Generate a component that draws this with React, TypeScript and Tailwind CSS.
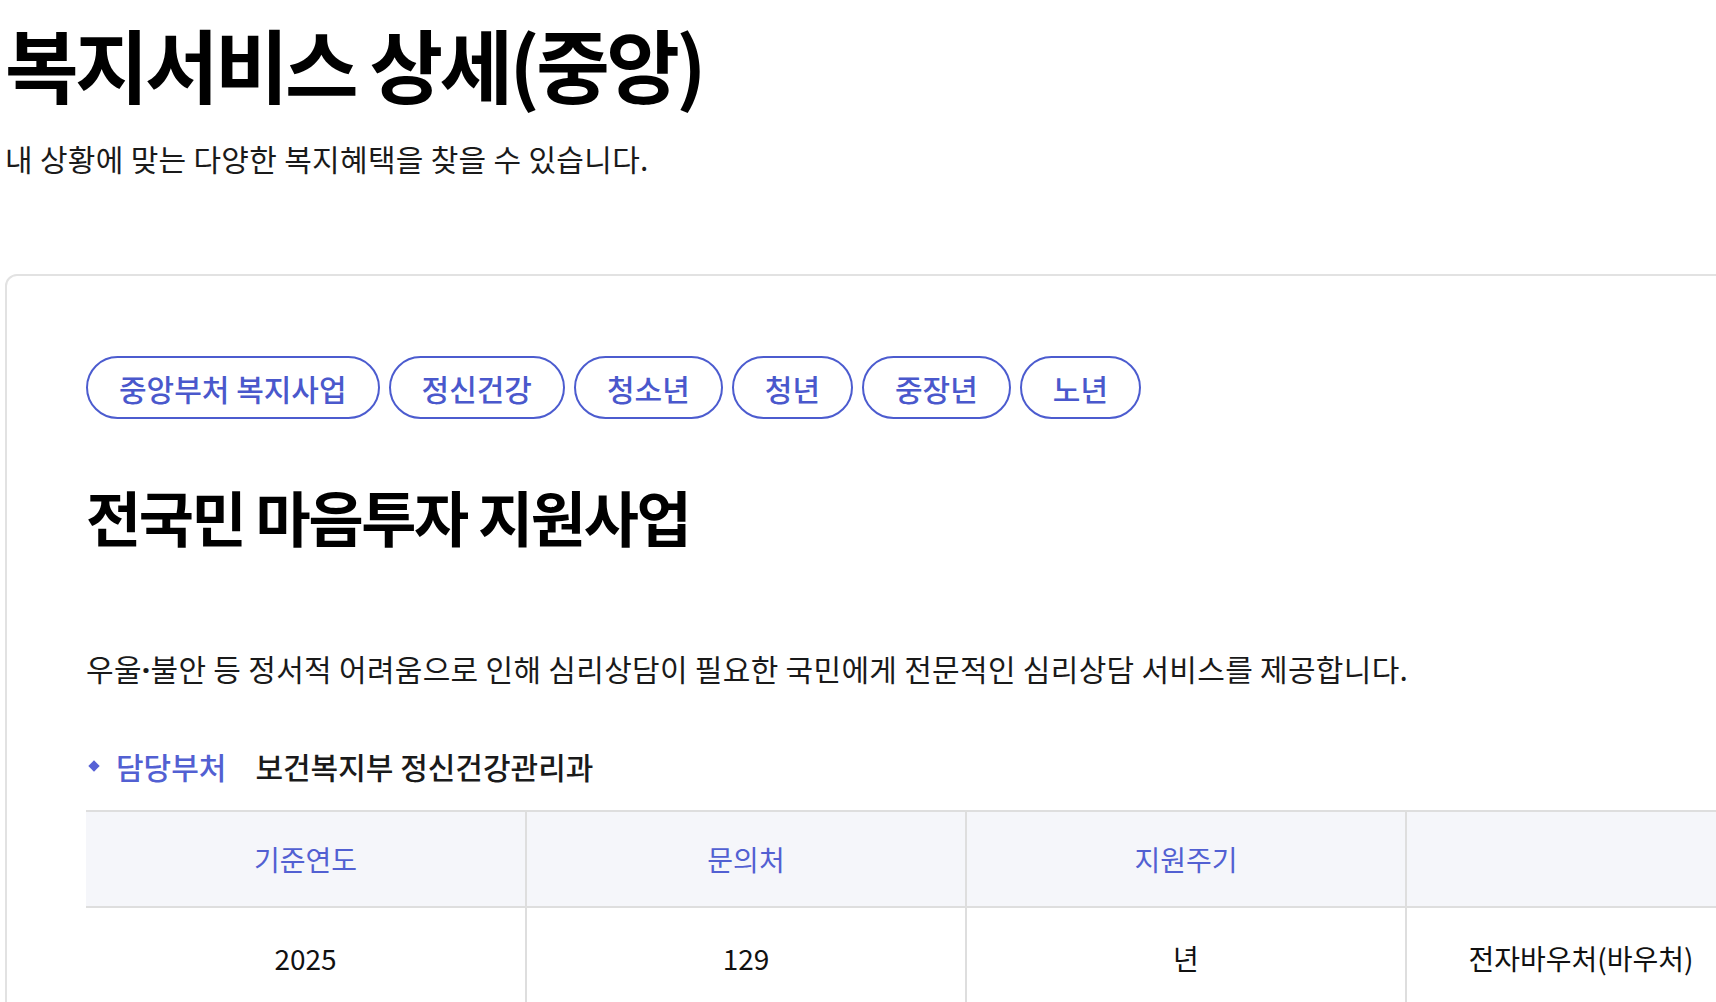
import React from 'react'

const TAGS = ['중앙부처 복지사업', '정신건강', '청소년', '청년', '중장년', '노년']

const HEADERS = ['기준연도', '문의처', '지원주기', '']
const VALUES = ['2025', '129', '년', '전자바우처(바우처)']
const COL_W = ['w-[439px]', 'w-[440px]', 'w-[440px]', 'w-[350px]']

const App = () => {
    return (
        <div className="h-[1002px] w-[1716px] overflow-hidden bg-white font-['Noto_Sans_CJK_KR','Noto_Sans',sans-serif] text-[#111]">
            <div className="pl-[5px]">
                <h1 className="pt-[22px] text-[80px] font-bold leading-none tracking-[-0.045em] text-black">
                    복지서비스 상세(중앙)
                </h1>
                <p className="mt-[41px] text-[30px] leading-none tracking-[0.01em] text-[#1a1a1a]">
                    내 상황에 맞는 다양한 복지혜택을 찾을 수 있습니다.
                </p>

                <div className="mt-[101px] w-[1800px] rounded-tl-[12px] border-2 border-[#e2e2e2] pl-[79px] pt-[80px]">
                    <div className="flex gap-[9px]">
                        {TAGS.map((tag) => (
                            <span
                                key={tag}
                                className="flex h-[63px] items-center rounded-full border-2 border-[#4c5ccf] px-[31px] text-[30px] font-medium leading-none text-[#4a58cc]"
                            >
                                {tag}
                            </span>
                        ))}
                    </div>

                    <h2 className="mt-[67px] text-[60px] font-bold leading-none tracking-[-0.04em] text-black">
                        전국민 마음투자 지원사업
                    </h2>

                    <p className="mt-[107px] text-[30px] leading-none tracking-[0.01em] text-[#1a1a1a]">
                        우울<span className="font-['Noto_Sans',sans-serif] font-bold">·</span>불안 등 정서적 어려움으로 인해 심리상담이 필요한 국민에게 전문적인 심리상담 서비스를 제공합니다.
                    </p>

                    <div className="mt-[66px] flex items-center text-[30px] font-medium leading-none">
                        <span className="ml-[4px] mr-[18px] h-[8px] w-[8px] rotate-45 bg-[#5661d6]" />
                        <span className="text-[#5260d2]">담당부처</span>
                        <span className="ml-[29px] text-[#1a1a1a]">보건복지부 정신건강관리과</span>
                    </div>

                    <div className="mt-[29px] border-t-2 border-[#dedede]">
                        <div className="flex h-[96px] border-b-2 border-[#dedede] bg-[#f5f6fa]">
                            {HEADERS.map((h, i) => (
                                <div
                                    key={i}
                                    className={`${COL_W[i]} flex items-center justify-center text-[28px] leading-none text-[#5260d2] ${
                                        i > 0 ? 'border-l-2 border-[#dedede]' : ''
                                    }`}
                                >
                                    {h}
                                </div>
                            ))}
                            <div className="flex-1" />
                        </div>
                        <div className="flex h-[106px]">
                            {VALUES.map((v, i) => (
                                <div
                                    key={i}
                                    className={`${COL_W[i]} flex items-center justify-center pb-[6px] text-[28px] leading-none text-[#111] ${
                                        i > 0 ? 'border-l-2 border-[#dedede]' : ''
                                    }`}
                                >
                                    {v}
                                </div>
                            ))}
                            <div className="flex-1 border-l-2 border-[#dedede]" />
                        </div>
                    </div>
                </div>
            </div>
        </div>
    )
}

export default App
